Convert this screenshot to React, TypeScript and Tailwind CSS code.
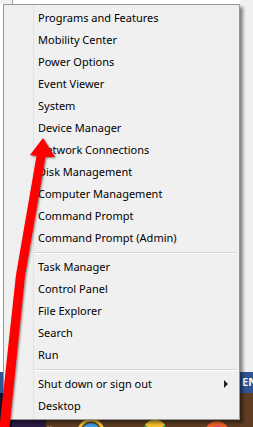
import React from "react";

type Item = { label: string; sub?: boolean };

const groups: Item[][] = [
  [
    { label: "Programs and Features" },
    { label: "Mobility Center" },
    { label: "Power Options" },
    { label: "Event Viewer" },
    { label: "System" },
    { label: "Device Manager" },
    { label: "Network Connections" },
    { label: "Disk Management" },
    { label: "Computer Management" },
    { label: "Command Prompt" },
    { label: "Command Prompt (Admin)" },
  ],
  [
    { label: "Task Manager" },
    { label: "Control Panel" },
    { label: "File Explorer" },
    { label: "Search" },
    { label: "Run" },
  ],
  [{ label: "Shut down or sign out", sub: true }, { label: "Desktop" }],
];

const MenuRow = ({ item }: { item: Item }) => (
  <div className="flex h-[22px] items-center pb-[2px] pl-[4px] pr-[11px] text-[11px] text-black">
    <span className="leading-none">{item.label}</span>
    {item.sub && (
      <span className="ml-auto mt-[2px] h-0 w-0 border-y-[4px] border-l-[4px] border-y-transparent border-l-[#222]" />
    )}
  </div>
);

const Separator = () => (
  <div className="flex h-[7px] flex-col justify-center pr-[2px]">
    <div className="h-px bg-[#d7d7d7]" />
    <div className="h-px bg-white" />
  </div>
);

const WinXMenu = () => (
  <div className="absolute left-[3px] top-[4px] flex w-[237px] border border-[#979797] bg-[#f0f0f0] shadow-[3px_3px_3px_rgba(0,0,0,0.45)]">
    <div className="w-[29px] shrink-0" />
    <div className="flex-1 border-l border-[#e2e2e2] py-[2px]">
      {groups.map((group, gIndex) => (
        <React.Fragment key={gIndex}>
          {gIndex > 0 && <Separator />}
          {group.map((item) => (
            <MenuRow key={item.label} item={item} />
          ))}
        </React.Fragment>
      ))}
    </div>
  </div>
);

const Taskbar = () => (
  <>
    {/* blue strip behind the menu */}
    <div className="absolute left-0 top-[372px] h-[21px] w-full bg-[#2f5597]">
      <span className="absolute left-[242px] top-[4px] text-[11px] font-bold leading-none text-white">
        EN
      </span>
    </div>
    {/* taskbar */}
    <div className="absolute bottom-0 left-0 top-[393px] flex w-full">
      <div className="w-[12px] bg-[#14122a]" />
      <div className="w-[34px] bg-[#2b1d45]" />
      <div className="flex-1 bg-[#5e3d22]" />
    </div>
    {/* partial taskbar icons */}
    <svg className="absolute left-0 top-[419px]" width="253" height="8">
      <circle cx="48" cy="8" r="1" fill="#a08060" />
      <circle cx="51" cy="8" r="1" fill="#a08060" />
      <circle cx="91" cy="13" r="12" fill="none" stroke="#f2c23a" strokeWidth="3" />
      <circle cx="91" cy="13" r="9" fill="#3a9ee0" />
      <circle cx="155" cy="13" r="12" fill="#2e9e46" />
      <path d="M145 6 A12 12 0 0 1 165 6 L155 13 Z" fill="#f6c22c" />
      <circle cx="217" cy="14" r="12" fill="#f0612a" />
      <circle cx="217" cy="16" r="9" fill="#d83a8a" />
    </svg>
  </>
);

const RedArrow = () => (
  <svg className="pointer-events-none absolute left-0 top-0" width="253" height="427">
    <defs>
      <filter id="s" x="-20%" y="-20%" width="140%" height="140%">
        <feDropShadow dx="1" dy="1" stdDeviation="0.8" floodColor="#000" floodOpacity="0.5" />
      </filter>
    </defs>
    <polygon
      filter="url(#s)"
      fill="#ff0000"
      points="43,138 55,157 45.5,157 25,276 9,432 -1,432 16,275 36.5,156 30,155"
    />
  </svg>
);

export default function App() {
  return (
    <div
      className="relative h-[427px] w-[253px] overflow-hidden bg-white"
      style={{ fontFamily: '"Noto Sans", "Open Sans", sans-serif' }}
    >
      {/* desktop / window behind */}
      <div className="absolute left-0 top-0 h-[4px] w-[12px] bg-[#f0f0f0]" />
      <div className="absolute left-[12px] top-0 h-[4px] w-px bg-[#a6a6a6]" />
      <div className="absolute right-0 top-0 h-[372px] w-[13px] bg-[#f0f0f0]" />
      <Taskbar />
      <WinXMenu />
      <RedArrow />
    </div>
  );
}
